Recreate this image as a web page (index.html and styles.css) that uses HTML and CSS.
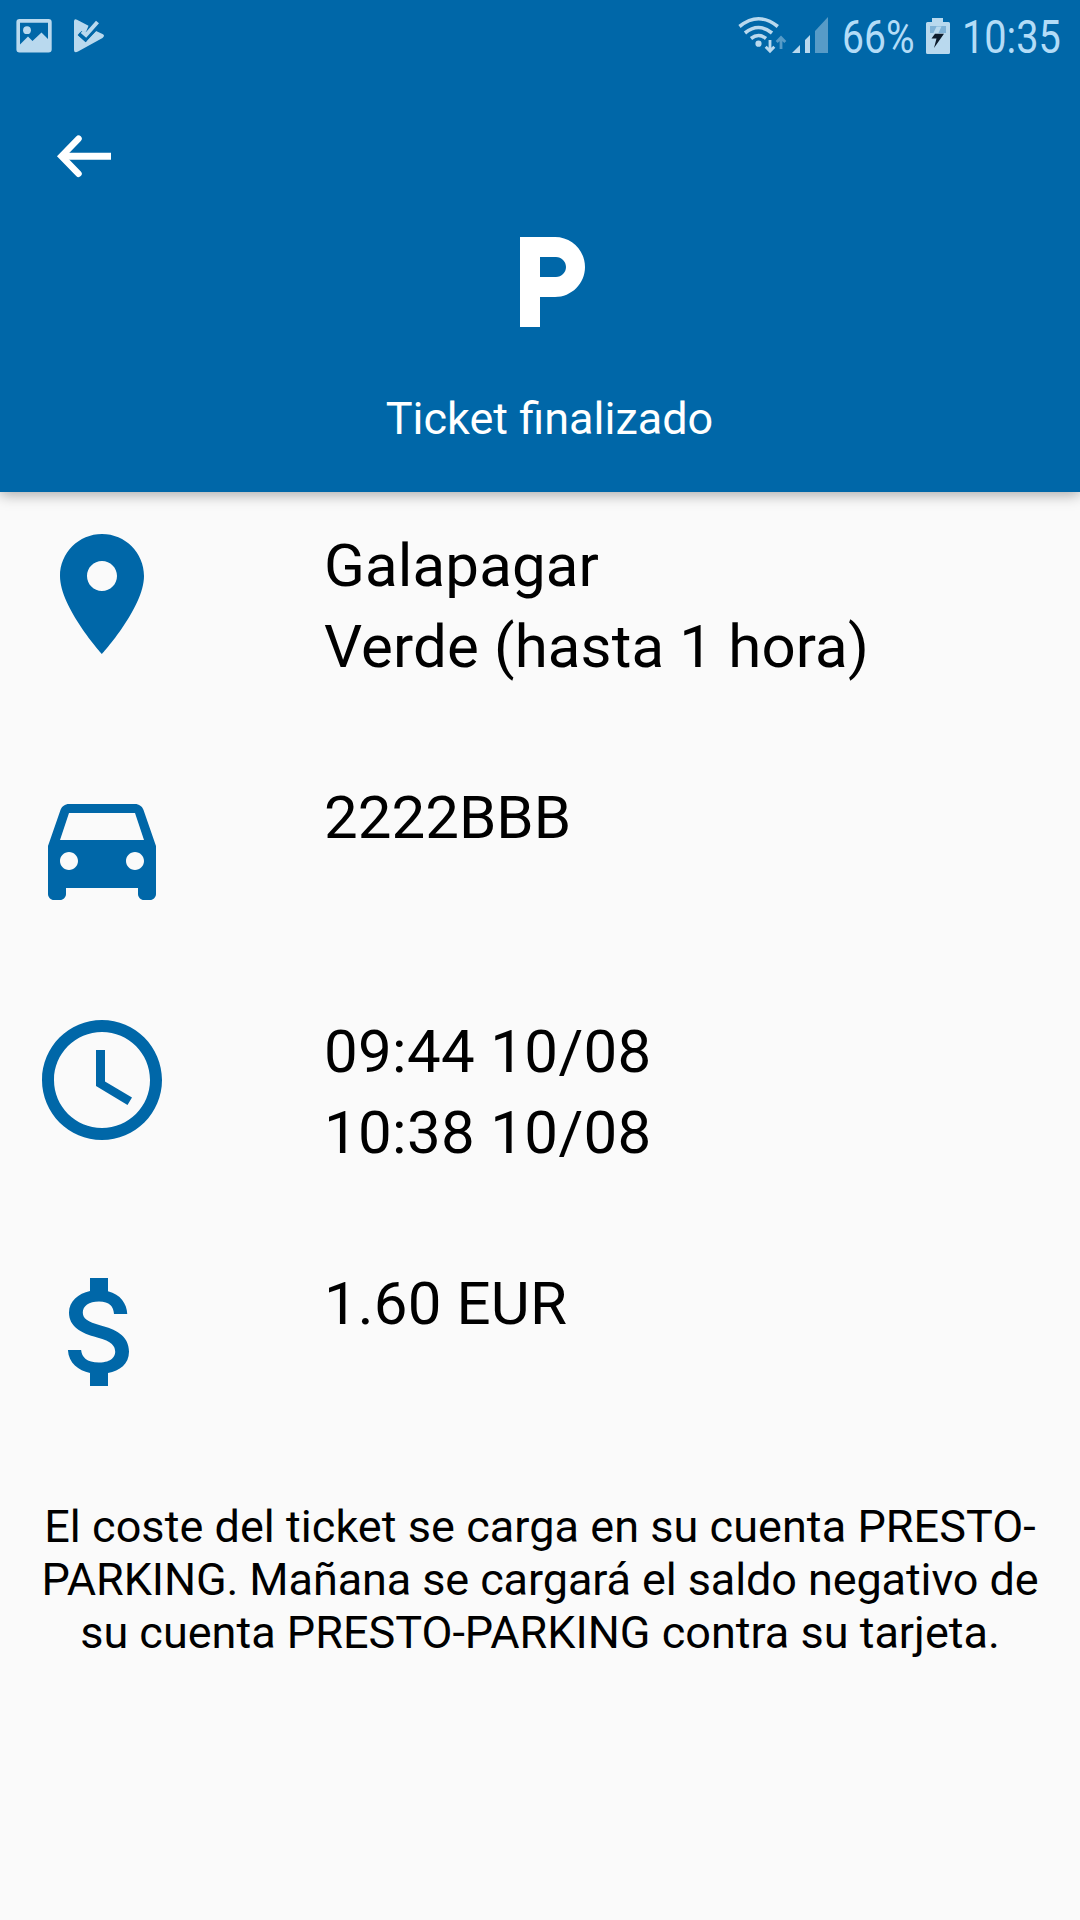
FILE: index.html
```html
<!DOCTYPE html>
<html lang="es">
<head>
<meta charset="utf-8">
<title>Ticket finalizado</title>
<link rel="stylesheet" href="styles.css">
</head>
<body>
<header class="header">
  <div class="status">
    <svg class="notifications" width="90" height="36" viewBox="16 18 90 36">
      <path fill-rule="evenodd" d="M19.500 19H48.500Q51.700 19 51.700 22V49.500Q51.700 52.500 48.500 52.500H19.500Q16.400 52.500 16.400 49.500V22Q16.400 19 19.500 19ZM20 22.700V44.500L28 36.500L32.500 41L41.500 32.500L48 39V22.700Z"/>
      <circle cx="27" cy="30.200" r="3.900"/>
      <path d="M74 21.500Q74 18.500 77 19.700L88.500 25.800L86 32L81.500 31L79 34L85.500 41.500L96 31L102.500 34Q105.500 35.500 102.500 38L78 51.600Q74 53.300 74 50Z"/>
      <path class="check" d="M79.500 34L85.500 39L97.500 22"/>
      <path class="check-gap" d="M79 33.500L85.500 39.500L98 26"/>
      <path class="check-mark" d="M82 31.500L86 35L97.500 22"/>
    </svg>
    <div class="indicators">
      <svg class="signals" width="92" height="38" viewBox="738 16 92 38">
        <g class="waves">
          <path d="M739.500 26.500Q758.500 11 777.800 26.500"/>
          <path d="M745 33Q758.500 22 772 33"/>
          <path d="M751 38.500Q758.500 32.500 766 38.500"/>
        </g>
        <circle cx="758.500" cy="43.700" r="3.100"/>
        <path class="arrow" d="M770 40V51M765.700 46.700L770 51.200L774.300 46.700"/>
        <path class="arrow dim-line" d="M781 49V38M776.700 42L781 37.500L785.300 42"/>
        <path d="M792 53L800 45V53ZM805 53V40L810 35V53Z"/>
        <path class="dim" d="M815 53V31L828 17V53Z"/>
      </svg>
      <span class="percent">66%</span>
      <svg class="battery" width="26" height="38" viewBox="925 17 26 38">
        <path d="M932 18H943V22H948.500Q950 22 950 23.500V52.500Q950 54 948.500 54H927.500Q926 54 926 52.500V23.500Q926 22 927.500 22H932Z"/>
        <path class="level" d="M930 26H946V33H930Z"/>
        <path d="M936.500 26.500H941.500L938 34H933Z"/>
        <path class="bolt" d="M935 33.800H944L934 48L936.500 38.500H931.500Z"/>
      </svg>
      <span class="clock">10:35</span>
    </div>
  </div>
  <svg class="back" width="58" height="46" viewBox="55 133 58 46">
    <path class="shaft" d="M62 156.200H111"/>
    <path class="head" d="M78.500 138.700L61.500 156.200L78.500 173.700"/>
  </svg>
  <div class="heading">
    <svg class="parking" width="120" height="120" viewBox="0 0 24 24"><path d="M13 3H6v18h4v-6h3c3.310 0 6-2.690 6-6s-2.690-6-6-6zm.2 8H10V7h3.200c1.100 0 2 .9 2 2s-.9 2-2 2z"/></svg>
    <h1 class="title">Ticket finalizado</h1>
  </div>
</header>
<main class="content">
  <div class="row">
    <svg class="icon" viewBox="0 0 24 24"><path d="M12 2C8.130 2 5 5.130 5 9c0 5.250 7 13 7 13s7-7.750 7-13c0-3.870-3.130-7-7-7zm0 9.500c-1.380 0-2.500-1.120-2.500-2.500s1.120-2.500 2.500-2.500 2.500 1.120 2.500 2.500-1.120 2.500-2.500 2.500z"/></svg>
    <div class="value value-place">Galapagar<br>Verde (hasta 1 hora)</div>
  </div>
  <div class="row row-short">
    <svg class="icon" viewBox="0 0 24 24"><path d="M18.920 6.010C18.720 5.420 18.160 5 17.500 5h-11c-.66 0-1.210.42-1.420 1.010L3 12v8c0 .55.450 1 1 1h1c.55 0 1-.45 1-1v-1h12v1c0 .55.450 1 1 1h1c.55 0 1-.45 1-1v-8l-2.080-5.990zM6.500 16c-.83 0-1.500-.67-1.500-1.500S5.670 13 6.500 13s1.500.67 1.500 1.500S7.330 16 6.500 16zm11 0c-.83 0-1.500-.67-1.500-1.500s.67-1.500 1.500-1.500 1.500.67 1.500 1.500-.67 1.500-1.500 1.500zM5 11l1.500-4.500h11L19 11H5z"/></svg>
    <div class="value">2222BBB</div>
  </div>
  <div class="row">
    <svg class="icon" viewBox="0 0 24 24"><path d="M11.990 2C6.470 2 2 6.480 2 12s4.470 10 9.990 10C17.520 22 22 17.520 22 12S17.520 2 11.990 2zM12 20c-4.420 0-8-3.580-8-8s3.580-8 8-8 8 3.580 8 8-3.580 8-8 8zm.5-13H11v6l5.250 3.150.75-1.230-4.500-2.670z"/></svg>
    <div class="value value-time">09:44 10/08<br>10:38 10/08</div>
  </div>
  <div class="row row-price">
    <svg class="icon" viewBox="0 0 24 24"><path d="M11.800 10.900c-2.270-.59-3-1.200-3-2.150 0-1.090 1.010-1.850 2.700-1.850 1.780 0 2.440.85 2.500 2.100h2.210c-.07-1.720-1.120-3.300-3.210-3.810V3h-3v2.160c-1.940.42-3.500 1.680-3.500 3.610 0 2.310 1.910 3.460 4.700 4.130 2.500.6 3 1.480 3 2.410 0 .69-.49 1.790-2.700 1.790-2.060 0-2.870-.92-2.980-2.100h-2.200c.12 2.190 1.760 3.420 3.680 3.830V21h3v-2.150c1.950-.37 3.500-1.500 3.500-3.550 0-2.840-2.430-3.810-4.700-4.400z"/></svg>
    <div class="value value-price">1.60 EUR</div>
  </div>
  <p class="note"><span class="note-loose">El coste del ticket se carga en su cuenta PRESTO-</span><br><span class="note-tight">PARKING. Mañana se cargará el saldo negativo de</span><br>su cuenta PRESTO-PARKING contra su tarjeta.</p>
</main>
</body>
</html>
```
FILE: styles.css
```css
* {
  box-sizing: border-box;
}

body {
  margin: 0;
  width: 1080px;
  min-height: 1920px;
  background: #fafafa;
  color: #000;
  font-family: Roboto, "Liberation Sans", sans-serif;
}

svg {
  display: block;
  flex: none;
}

.header {
  height: 492px;
  background: #0067a8;
  color: #fff;
  box-shadow: 0 2px 14px rgba(0, 0, 0, 0.36);
}

.status {
  display: flex;
  justify-content: space-between;
  height: 72px;
  padding-left: 16px;
  color: #b3dcf7;
  fill: #b9d9ee;
}

.notifications {
  margin-top: 18px;
}

.check,
.check-gap,
.check-mark {
  fill: none;
  stroke: #0067a8;
  stroke-width: 4;
}

.check-mark {
  stroke: #b9d9ee;
}

.indicators {
  display: flex;
  width: 342px;
}

.signals {
  margin-top: 16px;
}

.waves {
  fill: none;
  stroke: #b9d9ee;
  stroke-width: 3.6;
}

.arrow {
  fill: none;
  stroke: #b9d9ee;
  stroke-width: 2.8;
}

.dim-line {
  stroke: #579bc7;
}

.dim {
  fill: #579bc7;
}

.percent,
.clock {
  margin-top: 10px;
  font-size: 46px;
  line-height: 54px;
  white-space: nowrap;
  transform: scaleX(0.85);
  transform-origin: left;
}

.percent {
  width: 83px;
  margin-left: 12px;
}

.battery {
  margin-top: 17px;
}

.level {
  fill: #7fb2d6;
}

.bolt {
  fill: #0d1b2b;
}

.clock {
  width: 110px;
  margin-left: 11px;
  transform: scaleX(0.863);
}

.back {
  margin: 61px 0 0 55px;
  fill: none;
  stroke: #fff;
}

.shaft {
  stroke-width: 7;
}

.head {
  stroke-width: 6.5;
  stroke-linecap: round;
}

.heading {
  display: flex;
  flex-direction: column;
  align-items: center;
  padding-left: 19px;
  margin-top: 43px;
}

.parking {
  fill: #fff;
}

.title {
  margin: 50px 0 0;
  font-size: 45px;
  line-height: 53px;
  font-weight: 400;
}

.content {
  padding: 30px 30px 0;
}

.row {
  display: flex;
  height: 252px;
}

.row-short {
  height: 234px;
}

.row-price {
  height: 240px;
}

.icon {
  width: 144px;
  height: 144px;
  fill: #0067a8;
}

.value {
  padding-top: 3px;
  margin-left: 150px;
  font-size: 60px;
  line-height: 81px;
}

.value-place {
  letter-spacing: 0.15px;
}

.value-time {
  letter-spacing: 0.33px;
}

.value-price {
  letter-spacing: 0.15px;
}

.note {
  margin: 0;
  font-size: 45px;
  line-height: 53px;
  text-align: center;
}

.note-loose {
  letter-spacing: 0.05px;
}

.note-tight {
  letter-spacing: -0.1px;
}
```
